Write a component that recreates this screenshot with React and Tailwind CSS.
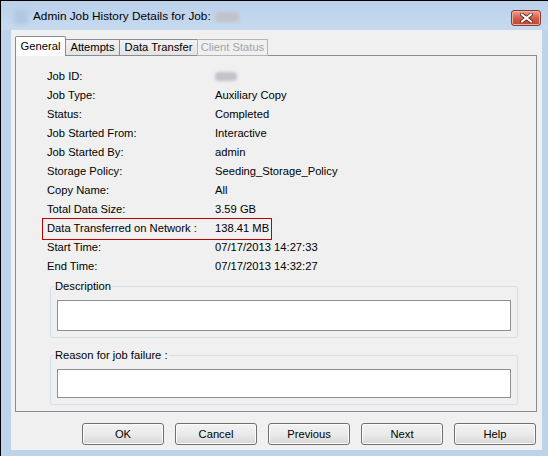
// Admin Job History Details dialog (Windows 7 style)
const rows = [
  ["Job ID:", null],
  ["Job Type:", "Auxiliary Copy"],
  ["Status:", "Completed"],
  ["Job Started From:", "Interactive"],
  ["Job Started By:", "admin"],
  ["Storage Policy:", "Seeding_Storage_Policy"],
  ["Copy Name:", "All"],
  ["Total Data Size:", "3.59 GB"],
  ["Data Transferred on Network :", "138.41 MB"],
  ["Start Time:", "07/17/2013 14:27:33"],
  ["End Time:", "07/17/2013 14:32:27"],
];

function Blurred({ w, h = 9 }) {
  // redacted number in the screenshot
  return (
    <span
      className="inline-block bg-[#c2c2ca] blur-[1.5px] rounded-sm"
      style={{ width: w, height: h }}
    />
  );
}

function Button({ children }) {
  return (
    <button
      type="button"
      className="w-[82px] h-[22px] rounded-[3px] border border-[#707070] bg-gradient-to-b from-[#f2f2f2] via-[#ebebeb] to-[#d6d6d6] text-[11.2px] text-black shadow-[inset_0_0_0_1px_#fcfcfc]"
    >
      {children}
    </button>
  );
}

function Group({ title, boxH }) {
  return (
    <fieldset className="ml-[34px] w-[468px] border border-[#d5dfe5] rounded-[3px] px-[6px] pb-[6px]">
      <legend className="ml-[-3px] px-[1px] leading-[14px]">{title}</legend>
      <div
        className="mt-[7px] bg-white border border-[#8e8f8f]"
        style={{ height: boxH }}
      />
    </fieldset>
  );
}

export default function App() {
  return (
    <div className="w-[548px] h-[456px] bg-[#bcd3ea] border-t border-l border-black flex flex-col font-['Liberation_Sans',sans-serif] text-[11.2px] text-black overflow-hidden">
      {/* title bar */}
      <div className="h-[29px] flex items-center pl-[13px] bg-gradient-to-b from-[#bad1ea] to-[#c6daef]">
        <span className="w-[14px] h-[14px] bg-[#b0c8e0] blur-[2px] mt-[3px]" />
        <span className="ml-[5px] mt-[3px] text-[11.8px] text-black flex items-center gap-[4px]">
          Admin Job History Details for Job:
          <Blurred w={24} h={10} />
        </span>
        <div className="ml-auto mr-[7px] mt-[5px] w-[30px] h-[16px] rounded-[3px] border border-[#8a3a2e] bg-gradient-to-b from-[#e8a496] via-[#d2604c] to-[#c0432e] flex items-center justify-center shadow-[inset_0_0_0_1px_#eab0a2]">
          <svg width="13" height="10" viewBox="0 0 13 10">
            <path d="M2 1.5 L11 8.5 M11 1.5 L2 8.5" stroke="#5a2218" strokeWidth="3.6" strokeLinecap="square" />
            <path d="M2 1.5 L11 8.5 M11 1.5 L2 8.5" stroke="#ffffff" strokeWidth="2" strokeLinecap="square" />
          </svg>
        </div>
      </div>

      {/* client area */}
      <div className="ml-[10px] mr-[6px] mb-[6px] flex-1 bg-[#f0f0f0] flex flex-col pt-[6px] pl-[4px] pr-[5px]">
        {/* tabs */}
        <div className="relative z-10 -mb-px h-[20px] flex items-end">
          <div className="w-[51px] h-[20px] bg-white border-l border-t border-r border-[#898c95] rounded-t-[2px] flex items-center justify-center pb-[1px]">
            General
          </div>
          <div className="w-[55px] h-[17px] -ml-px bg-gradient-to-b from-[#f2f2f2] to-[#e3e3e3] border border-[#898c95] flex items-center justify-center">
            Attempts
          </div>
          <div className="w-[79px] h-[17px] -ml-px bg-gradient-to-b from-[#f2f2f2] to-[#e3e3e3] border border-[#898c95] flex items-center justify-center">
            Data Transfer
          </div>
          <div className="w-[71px] h-[17px] -ml-px bg-[#f0f0f0] border border-[#b5b5b5] text-[#a3a3a3] flex items-center justify-center">
            Client Status
          </div>
        </div>

        {/* panel */}
        <div className="h-[357px] border border-[#898c95] bg-[#f0f0f0] pt-[11px]">
          <div className="pl-[31px]">
            {rows.map(([label, value], i) => (
              <div key={label} className="relative h-[19px] flex items-center">
                {i === 8 && (
                  <span className="absolute left-[-5px] top-[-1px] w-[230px] h-[22px] border border-[#c00000]" />
                )}
                <span className="w-[168px]">{label}</span>
                <span className="flex items-center">
                  {value === null ? <Blurred w={22} /> : value}
                </span>
              </div>
            ))}
          </div>
          <div className="mt-[3px]">
            <Group title="Description" boxH={31} />
          </div>
          <div className="mt-[10px]">
            <Group title="Reason for job failure :" boxH={29} />
          </div>
        </div>

        {/* buttons */}
        <div className="mt-[11px] flex justify-end gap-[11px] mr-[1px]">
          <Button>OK</Button>
          <Button>Cancel</Button>
          <Button>Previous</Button>
          <Button>Next</Button>
          <Button>Help</Button>
        </div>
      </div>
    </div>
  );
}
